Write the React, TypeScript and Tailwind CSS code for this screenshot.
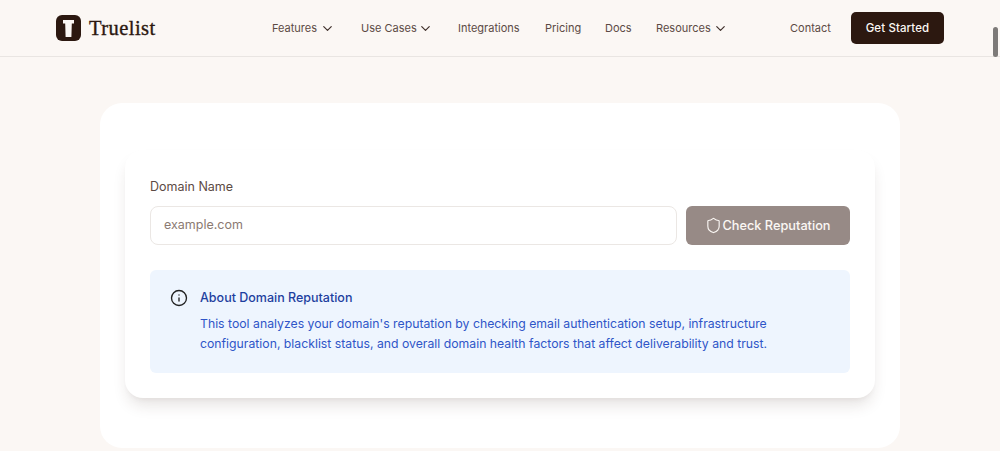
import { ChevronDown, Shield, Info } from "lucide-react";

function NavItem({ label, chevron, w }: { label: string; chevron?: boolean; w: string }) {
  return (
    <div className={`flex shrink-0 items-center justify-between whitespace-nowrap pt-[1px] text-[11px] text-[#5c4a44] ${w}`}>
      <span>{label}</span>
      {chevron && <ChevronDown size={15} strokeWidth={1.9} className="-mr-[2px] text-[#3f302b]" />}
    </div>
  );
}

export default function App() {
  return (
    <div className="relative h-[451px] w-[1000px] overflow-hidden bg-[#fbf7f4] font-['Inter',sans-serif]">
      <header className="flex h-[57px] items-center border-b border-[#e9e5e2] pl-[56px]">
        <div className="flex w-[216px] shrink-0 items-center gap-[8px]">
          <svg width="25" height="26" viewBox="0 0 25 26">
            <rect x="0" y="0" width="25" height="26" rx="6" fill="#2c1810" />
            <path d="M7 5 H18 V8.5 H15.8 L15.4 22 H9.6 L9.2 8.5 H7 Z" fill="#fbf7f4" />
          </svg>
          <span className="font-['Liberation_Serif',serif] text-[20.5px] leading-none tracking-[0.45px] text-[#2c1810] [-webkit-text-stroke:0.35px_#2c1810]">Truelist</span>
        </div>
        <nav className="flex items-center">
          <NavItem label="Features" chevron w="w-[61px] mr-[28px]" />
          <NavItem label="Use Cases" chevron w="w-[70px] mr-[27px]" />
          <NavItem label="Integrations" w="w-[61px] mr-[26px]" />
          <NavItem label="Pricing" w="w-[35px] mr-[25px]" />
          <NavItem label="Docs" w="w-[26px] mr-[25px]" />
          <NavItem label="Resources" chevron w="w-[70px] mr-[64px]" />
          <NavItem label="Contact" w="w-[42px] mr-[19px]" />
          <button className="flex h-[32px] w-[93px] shrink-0 items-center justify-center rounded-[5px] bg-[#2c1810] pt-[1px] text-[11.5px] font-medium tracking-[0.1px] text-[#fbf7f4]">
            Get Started
          </button>
        </nav>
      </header>

      <main className="mx-[100px] mt-[46px] flex h-[345px] flex-col rounded-[22px] bg-white px-[25px] pt-[47px]">
        <section className="h-[248px] rounded-[18px] bg-white px-[25px] pt-[28px] shadow-[0_10px_15px_-3px_rgba(60,40,30,0.13),0_4px_6px_-4px_rgba(60,40,30,0.08)]">
          <label className="block text-[12.5px] leading-[18px] text-[#5c4a44]">Domain Name</label>
          <div className="mt-[10px] flex gap-[9px]">
            <div className="flex h-[39px] w-[527px] items-center rounded-[8px] border border-[#ebe7e4] pl-[13px] text-[12.5px] text-[#8b7a72]">
              example.com
            </div>
            <button className="flex h-[39px] w-[164px] items-center justify-center rounded-[6px] bg-[#978a86] text-[12.75px] font-medium text-[#fbf7f4]">
              <Shield size={17} strokeWidth={1.6} />
              <span>Check Reputation</span>
            </button>
          </div>
          <div className="mt-[25px] flex h-[103px] rounded-[6px] bg-[#eef5fe] pl-[20px] pt-[19px]">
            <Info size={18} strokeWidth={1.8} className="shrink-0 text-[#222222]" />
            <div className="ml-[12px]">
              <h3 className="text-[12.5px] font-medium leading-[18px] text-[#1e3f9e]">About Domain Reputation</h3>
              <p className="mt-[7px] w-[600px] text-[12.25px] leading-[20px] text-[#2f55c8]">
                This tool analyzes your domain's reputation by checking email authentication setup, infrastructure configuration, blacklist status, and overall domain health factors that affect deliverability and trust.
              </p>
            </div>
          </div>
        </section>
      </main>

      <div className="absolute right-[2px] top-[27px] h-[30px] w-[5px] rounded-full bg-[#7d7a78]" />
    </div>
  );
}
